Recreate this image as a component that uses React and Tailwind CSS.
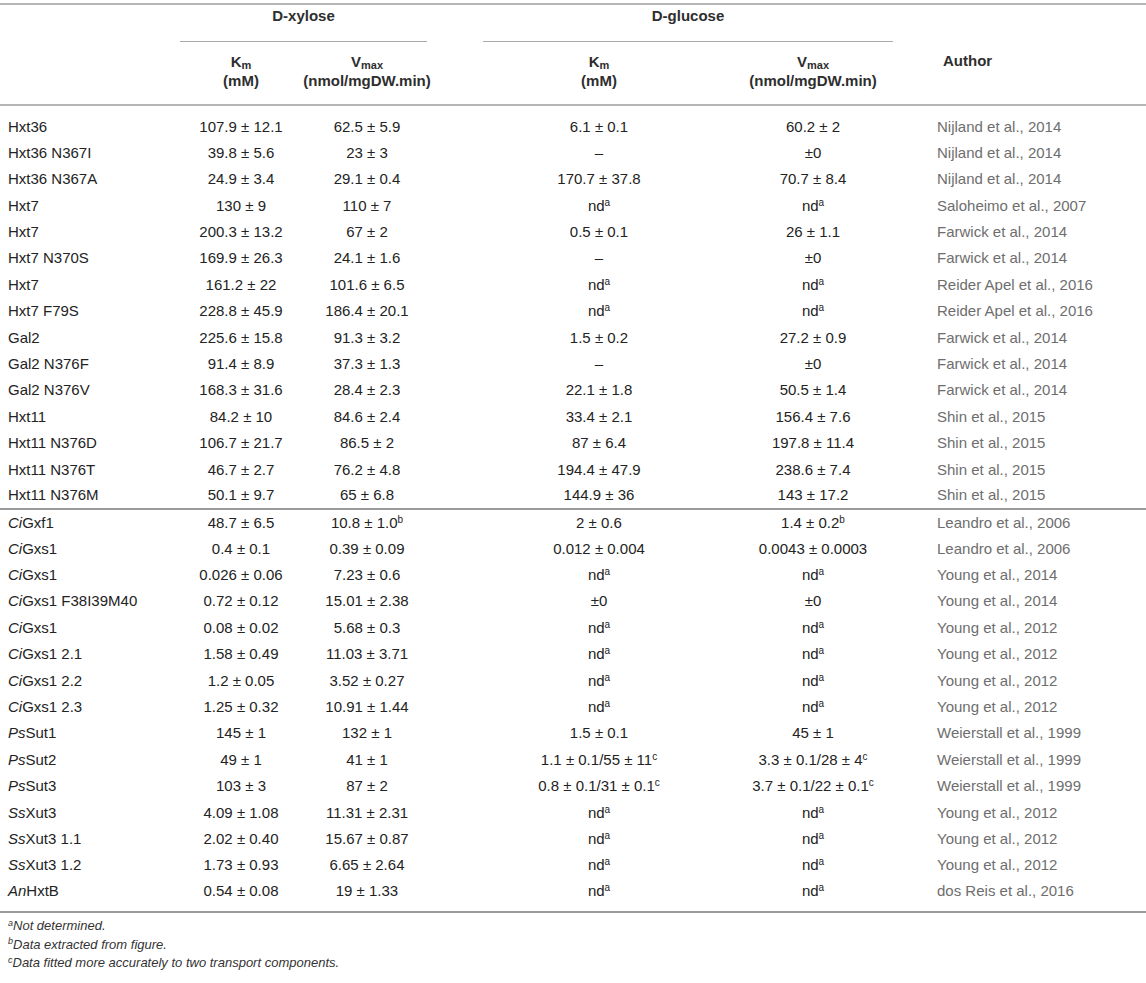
import React from "react";

const rows = [
  ["Hxt36", "107.9 ± 12.1", "62.5 ± 5.9", "6.1 ± 0.1", "60.2 ± 2", "Nijland et al., 2014"],
  ["Hxt36 N367I", "39.8 ± 5.6", "23 ± 3", "–", "±0", "Nijland et al., 2014"],
  ["Hxt36 N367A", "24.9 ± 3.4", "29.1 ± 0.4", "170.7 ± 37.8", "70.7 ± 8.4", "Nijland et al., 2014"],
  ["Hxt7", "130 ± 9", "110 ± 7", "nd^a", "nd^a", "Saloheimo et al., 2007"],
  ["Hxt7", "200.3 ± 13.2", "67 ± 2", "0.5 ± 0.1", "26 ± 1.1", "Farwick et al., 2014"],
  ["Hxt7 N370S", "169.9 ± 26.3", "24.1 ± 1.6", "–", "±0", "Farwick et al., 2014"],
  ["Hxt7", "161.2 ± 22", "101.6 ± 6.5", "nd^a", "nd^a", "Reider Apel et al., 2016"],
  ["Hxt7 F79S", "228.8 ± 45.9", "186.4 ± 20.1", "nd^a", "nd^a", "Reider Apel et al., 2016"],
  ["Gal2", "225.6 ± 15.8", "91.3 ± 3.2", "1.5 ± 0.2", "27.2 ± 0.9", "Farwick et al., 2014"],
  ["Gal2 N376F", "91.4 ± 8.9", "37.3 ± 1.3", "–", "±0", "Farwick et al., 2014"],
  ["Gal2 N376V", "168.3 ± 31.6", "28.4 ± 2.3", "22.1 ± 1.8", "50.5 ± 1.4", "Farwick et al., 2014"],
  ["Hxt11", "84.2 ± 10", "84.6 ± 2.4", "33.4 ± 2.1", "156.4 ± 7.6", "Shin et al., 2015"],
  ["Hxt11 N376D", "106.7 ± 21.7", "86.5 ± 2", "87 ± 6.4", "197.8 ± 11.4", "Shin et al., 2015"],
  ["Hxt11 N376T", "46.7 ± 2.7", "76.2 ± 4.8", "194.4 ± 47.9", "238.6 ± 7.4", "Shin et al., 2015"],
  ["Hxt11 N376M", "50.1 ± 9.7", "65 ± 6.8", "144.9 ± 36", "143 ± 17.2", "Shin et al., 2015"],
];

const rows2 = [
  [["Ci", "Gxf1"], "48.7 ± 6.5", "10.8 ± 1.0^b", "2 ± 0.6", "1.4 ± 0.2^b", "Leandro et al., 2006"],
  [["Ci", "Gxs1"], "0.4 ± 0.1", "0.39 ± 0.09", "0.012 ± 0.004", "0.0043 ± 0.0003", "Leandro et al., 2006"],
  [["Ci", "Gxs1"], "0.026 ± 0.06", "7.23 ± 0.6", "nd^a", "nd^a", "Young et al., 2014"],
  [["Ci", "Gxs1 F38I39M40"], "0.72 ± 0.12", "15.01 ± 2.38", "±0", "±0", "Young et al., 2014"],
  [["Ci", "Gxs1"], "0.08 ± 0.02", "5.68 ± 0.3", "nd^a", "nd^a", "Young et al., 2012"],
  [["Ci", "Gxs1 2.1"], "1.58 ± 0.49", "11.03 ± 3.71", "nd^a", "nd^a", "Young et al., 2012"],
  [["Ci", "Gxs1 2.2"], "1.2 ± 0.05", "3.52 ± 0.27", "nd^a", "nd^a", "Young et al., 2012"],
  [["Ci", "Gxs1 2.3"], "1.25 ± 0.32", "10.91 ± 1.44", "nd^a", "nd^a", "Young et al., 2012"],
  [["Ps", "Sut1"], "145 ± 1", "132 ± 1", "1.5 ± 0.1", "45 ± 1", "Weierstall et al., 1999"],
  [["Ps", "Sut2"], "49 ± 1", "41 ± 1", "1.1 ± 0.1/55 ± 11^c", "3.3 ± 0.1/28 ± 4^c", "Weierstall et al., 1999"],
  [["Ps", "Sut3"], "103 ± 3", "87 ± 2", "0.8 ± 0.1/31 ± 0.1^c", "3.7 ± 0.1/22 ± 0.1^c", "Weierstall et al., 1999"],
  [["Ss", "Xut3"], "4.09 ± 1.08", "11.31 ± 2.31", "nd^a", "nd^a", "Young et al., 2012"],
  [["Ss", "Xut3 1.1"], "2.02 ± 0.40", "15.67 ± 0.87", "nd^a", "nd^a", "Young et al., 2012"],
  [["Ss", "Xut3 1.2"], "1.73 ± 0.93", "6.65 ± 2.64", "nd^a", "nd^a", "Young et al., 2012"],
  [["An", "HxtB"], "0.54 ± 0.08", "19 ± 1.33", "nd^a", "nd^a", "dos Reis et al., 2016"],
];

function Val({ v }) {
  const [main, sup] = v.split("^");
  return (
    <>
      {main}
      {sup && <sup className="text-[10px]">{sup}</sup>}
    </>
  );
}

function Label({ name }) {
  if (typeof name === "string") return name;
  return (
    <>
      <i>{name[0]}</i>
      {name[1]}
    </>
  );
}

function Row({ r, first, last }) {
  const pad = first ? "pt-[9px]" : last ? "pb-[7px]" : "";
  return (
    <tr className={first ? "h-[35.4px]" : last ? "h-[33.4px]" : "h-[26.4px]"}>
      <td className={`pl-2 text-left ${pad}`}>
        <Label name={r[0]} />
      </td>
      <td className={`text-center ${pad}`}>
        <Val v={r[1]} />
      </td>
      <td className={`text-center ${pad}`}>
        <Val v={r[2]} />
      </td>
      <td className={pad}></td>
      <td className={`text-center ${pad}`}>
        <Val v={r[3]} />
      </td>
      <td className={`text-center ${pad}`}>
        <Val v={r[4]} />
      </td>
      <td className={`pl-[26px] text-left text-[#6e6e6e] ${pad}`}>{r[5]}</td>
    </tr>
  );
}

function Head({ sym, sub, unit }) {
  return (
    <th className="align-top pt-[10px] leading-[19px]">
      <div>
        {sym}
        <sub className="text-[11px]">{sub}</sub>
      </div>
      <div>{unit}</div>
    </th>
  );
}

export default function App() {
  return (
    <div className="w-[1146px] h-[983px] bg-white pt-[3px] font-['Liberation_Sans',Arial,sans-serif] text-[15px] text-[#232323]">
      <table className="w-full table-fixed border-collapse">
        <colgroup>
          <col className="w-[180px]" />
          <col className="w-[122px]" />
          <col className="w-[130px]" />
          <col className="w-[51px]" />
          <col className="w-[232px]" />
          <col className="w-[196px]" />
          <col className="w-[235px]" />
        </colgroup>
        <thead className="font-bold text-[#2e2e2e]">
          <tr className="h-[37px] border-t-2 border-[#b5b5b5]">
            <th></th>
            <th colSpan={2} className="align-top pt-0">
              <div className="mr-[5px] border-b border-[#aaa] pb-[13px]">D-xylose</div>
            </th>
            <th></th>
            <th colSpan={2} className="align-top pt-0">
              <div className="mr-[18px] border-b border-[#aaa] pb-[13px]">D-glucose</div>
            </th>
            <th></th>
          </tr>
          <tr className="h-[63px] border-b-2 border-[#b5b5b5]">
            <th></th>
            <Head sym="K" sub="m" unit="(mM)" />
            <Head sym="V" sub="max" unit="(nmol/mgDW.min)" />
            <th></th>
            <Head sym="K" sub="m" unit="(mM)" />
            <Head sym="V" sub="max" unit="(nmol/mgDW.min)" />
            <th className="text-left pl-[32px] align-top pt-[9px] leading-[19px]">Author</th>
          </tr>
        </thead>
        <tbody>
          {rows.map((r, i) => (
            <Row key={i} r={r} first={i === 0} />
          ))}
        </tbody>
        <tbody className="border-t-2 border-b-2 border-[#9a9a9a]">
          {rows2.map((r, i) => (
            <Row key={i} r={r} last={i === rows2.length - 1} />
          ))}
        </tbody>
      </table>
      <div className="pl-2 pt-[4px] text-[13px] italic leading-[18.5px] text-[#333]">
        <p>
          <sup className="text-[9px]">a</sup>Not determined.
        </p>
        <p>
          <sup className="text-[9px]">b</sup>Data extracted from figure.
        </p>
        <p>
          <sup className="text-[9px]">c</sup>Data fitted more accurately to two transport components.
        </p>
      </div>
    </div>
  );
}
